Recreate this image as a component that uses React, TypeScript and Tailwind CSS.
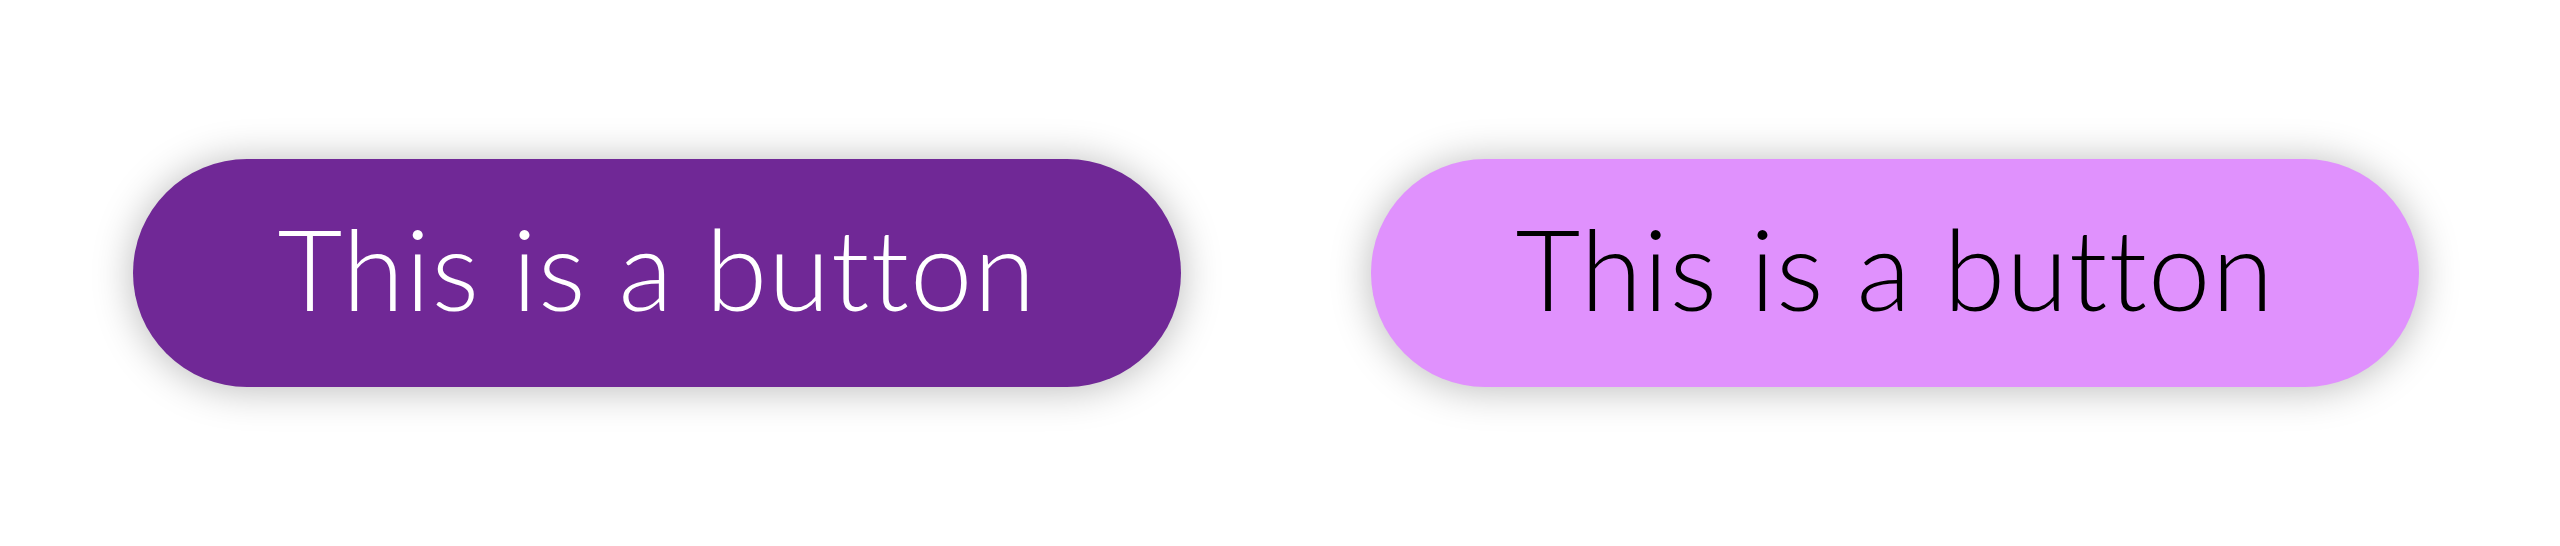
export default function App() {
  const label = "This is a button";
  return (
    <div className="flex h-[546px] w-[2560px] items-center gap-[190px] bg-white pl-[133px]">
      <button
        type="button"
        className="flex h-[228px] w-[1048px] shrink-0 items-center justify-center rounded-full bg-[#702896] text-[112px] font-light leading-none tracking-[1.2px] text-white shadow-[0_2px_40px_rgba(0,0,0,0.28)]"
        style={{ fontFamily: "Lato, 'Noto Sans', sans-serif" }}
      >
        <span className="pb-[10px]">{label}</span>
      </button>
      <button
        type="button"
        className="flex h-[228px] w-[1048px] shrink-0 items-center justify-center rounded-full bg-[#e091fd] text-[112px] font-light leading-none tracking-[1.2px] text-black shadow-[0_2px_40px_rgba(0,0,0,0.28)]"
        style={{ fontFamily: "Lato, 'Noto Sans', sans-serif" }}
      >
        <span className="pb-[10px]">{label}</span>
      </button>
    </div>
  );
}
